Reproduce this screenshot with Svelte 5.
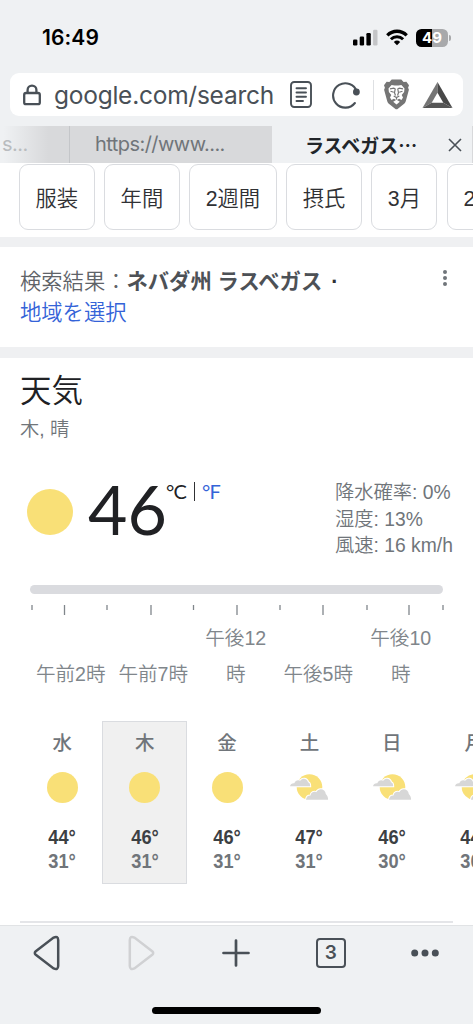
<script lang="ts">
    interface Day {
        name: string
        icon: 'sun' | 'cloudy'
        high: number
        low: number
    }

    const chips = ['服装', '年間', '2週間', '摂氏', '3月', '2月']

    const details = ['降水確率: 0%', '湿度: 13%', '風速: 16 km/h']

    const hours = ['午前2時', '午前7時', '午後12時', '午後5時', '午後10時']

    const ticks = [32, 64.5, 107, 151, 193.5, 237, 280, 323, 367, 409, 443]

    const days: Day[] = [
        { name: '水', icon: 'sun', high: 44, low: 31 },
        { name: '木', icon: 'sun', high: 46, low: 31 },
        { name: '金', icon: 'sun', high: 46, low: 31 },
        { name: '土', icon: 'cloudy', high: 47, low: 31 },
        { name: '日', icon: 'cloudy', high: 46, low: 30 },
        { name: '月', icon: 'cloudy', high: 44, low: 30 },
    ]

    let selected = $state(1)
</script>

<div class="phone">
    <header class="status-bar">
        <span class="time">16:49</span>
        <div class="status-icons">
            <svg class="signal" width="25" height="17" viewBox="0 0 25 17">
                <rect x="0" y="10.5" width="4.4" height="6" rx="1.2" />
                <rect x="6.7" y="7.5" width="4.4" height="9" rx="1.2" />
                <rect x="13.4" y="4" width="4.4" height="12.5" rx="1.2" />
                <rect x="20.1" y="0.8" width="4.4" height="15.7" rx="1.2" fill="#c4c5c7" />
            </svg>
            <svg class="wifi" width="22" height="17" viewBox="0 0 22 17" fill="none" stroke="#000">
                <path d="M1.3 6.3C6.7.9 15.3.9 20.7 6.3" stroke-width="3.3" />
                <path d="M4.9 10.2C8.3 6.8 13.7 6.8 17.1 10.2" stroke-width="3" />
                <path d="M7.8 12.9Q11 10.3 14.2 12.9L11 16.2Z" fill="#000" stroke="none" />
            </svg>
            <div class="battery">49</div>
            <span class="battery-tip"></span>
        </div>
    </header>

    <div class="address-bar">
        <svg class="lock" width="18" height="22" viewBox="0 0 18 22" fill="none" stroke="#495057" stroke-width="2.3">
            <rect x="1.2" y="9" width="15.6" height="11.2" rx="1.8" />
            <path d="M4.6 9V6a4.4 4.4 0 0 1 8.8 0v3" />
        </svg>
        <span class="url">google.com/search</span>
        <svg class="reader" width="22" height="27" viewBox="0 0 22 27" fill="none" stroke="#495057">
            <rect x="1" y="1" width="20" height="25" rx="3.2" stroke-width="1.9" />
            <path
                d="M6.5 7.3h9.5M6.5 11.5h9.5M6.5 15.8h9.5M6.5 20h6.5"
                stroke-width="1.9"
                stroke-linecap="round"
            />
        </svg>
        <svg class="reload" width="28" height="28" viewBox="0 0 28 28" fill="none">
            <path d="M24.8 10.4A12.2 12.2 0 1 0 22.9 22" stroke="#495057" stroke-width="2.1" stroke-linecap="round" />
            <circle cx="24.4" cy="11" r="3.4" fill="#495057" />
        </svg>
        <span class="separator"></span>
        <svg class="lion" width="27" height="31" viewBox="0 0 27 31">
            <path
                d="M8.7.5h9.6l2.3 2.5 2.8-.2 2.6 3.5-.9 2.4.8 2.1-3 11c-.5 1.7-1.3 2.8-2.7 3.8l-5.3 4.2q-1.4 1-2.8 0l-5.3-4.2C5.4 24.6 4.6 23.5 4.1 21.8l-3-11 .8-2.1L1 6.3l2.6-3.5 2.8.2Z"
                fill="#757575"
            />
            <path
                d="m8.6 6 3 .6h3.8l3-.6 3.1 3.6-.4 3.3-2.4 3.1 1.3 2.6-1.5 2.5-2.4-1.4-2.6 1.6-2.6-1.6-2.4 1.4L7 18.6l1.3-2.6-2.4-3.1-.4-3.3Z"
                fill="#fff"
            />
            <path
                d="M7 9.8l3.8-.7 1.4.9-.7 3.7 1 2.8M20 9.8l-3.8-.7-1.4.9.7 3.7-1 2.8M7.5 12.3l3.3 1M19.5 12.3l-3.3 1M10.7 17l2.8 1.5 2.8-1.5M13.5 18.5v2.2"
                fill="none"
                stroke="#757575"
                stroke-width="1.2"
            />
            <path d="m10.2 22.8 3.3-2 3.3 2-3.3 2.6Z" fill="#fff" />
        </svg>
        <svg class="bat" width="31" height="28" viewBox="0 0 31 28">
            <path d="M15.5 1 .5 27 9.7 21.7l5.8-10Z" fill="#757575" />
            <path d="m15.5 1 15 26-9.2-5.3-5.8-10Z" fill="#484848" />
            <path d="M.5 27h30l-9.2-5.3H9.7Z" fill="#555" />
        </svg>
    </div>

    <nav class="tabs">
        <div class="tab tab-first">s...</div>
        <div class="tab tab-second">https://www....</div>
        <div class="tab tab-active">
            <span class="tab-title">ラスベガス…</span>
            <svg width="14" height="14" viewBox="0 0 14 14">
                <path d="m1 1 12 12M13 1 1 13" stroke="#495057" stroke-width="1.6" />
            </svg>
        </div>
    </nav>

    <main>
        <div class="chips">
            {#each chips as chip}
                <button class="chip">{chip}</button>
            {/each}
        </div>

        <section class="location">
            <p>
                検索結果：<b>ネバダ州 ラスベガス</b><span class="dot">·</span><br />
                <a href="#region">地域を選択</a>
            </p>
            <svg width="6" height="18" viewBox="0 0 6 18" fill="#70757a">
                <circle cx="3" cy="3" r="2" />
                <circle cx="3" cy="9" r="2" />
                <circle cx="3" cy="15" r="2" />
            </svg>
        </section>

        <section class="weather">
            <h1>天気</h1>
            <p class="summary">木, 晴</p>

            <div class="current">
                <span class="sun sun-large"></span>
                <span class="temperature">46</span>
                <div class="units"><span class="deg">°</span>C<i></i><a href="#f"><span class="deg">°</span>F</a></div>
                <div class="details">
                    {#each details as detail}
                        <div>{detail}</div>
                    {/each}
                </div>
            </div>

            <div class="slider"></div>
            <svg class="ticks" width="473" height="12" viewBox="0 0 473 12">
                {#each ticks as x, i}
                    <line x1={x} x2={x} y1="1" y2={i % 2 ? 11 : 6} stroke="#80868b" stroke-width="1.3" />
                {/each}
            </svg>

            <div class="hours">
                {#each hours as hour}
                    <span>{hour}</span>
                {/each}
            </div>

            <div class="days">
                {#each days as day, i}
                    <button class="day" class:selected={i === selected} onclick={() => (selected = i)}>
                        <span class="day-name">{day.name}</span>
                        <span class="day-icon">
                            {#if day.icon === 'sun'}
                                <span class="sun"></span>
                            {:else}
                                <svg width="40" height="28" viewBox="0 0 40 28">
                                    <circle cx="20.5" cy="14" r="12.8" fill="#f9e077" />
                                    <path
                                        class="cloud"
                                        d="M1 13.3c.4-2.2 2-3.3 4.3-3.1 1-2.8 3.7-3.7 6-2.5 2.4-3.3 7-2.2 7.7 1.500 1.500.3 2.200 1.700 2.200 4.100Z"
                                    />
                                    <path
                                        class="cloud"
                                        d="M17 26.700c.3-3 1.900-4.400 4.500-4.300.6-3.100 3.200-4.400 5.800-3.200 2.200-4.700 9-3.700 9.500 1.700 1.500 1.400 2.300 3.300 2.300 5.800Z"
                                    />
                                </svg>
                            {/if}
                        </span>
                        <span class="high">{day.high}°</span>
                        <span class="low">{day.low}°</span>
                    </button>
                {/each}
            </div>
            <hr />
        </section>
    </main>

    <footer class="toolbar">
        <div class="actions">
            <svg width="28" height="36" viewBox="0 0 28 36" fill="none">
                <path
                    d="M2.8 16.2 20.6 2.6Q25 .5 25.2 5V31Q25 35.5 20.6 33.4L2.8 19.8Q.8 18 2.8 16.2Z"
                    stroke="#495057"
                    stroke-width="2.5"
                />
            </svg>
            <svg width="28" height="36" viewBox="0 0 28 36" fill="none">
                <path
                    d="M25.2 16.2 7.4 2.6Q3 .5 2.8 5V31Q3 35.5 7.4 33.4L25.2 19.8Q27.2 18 25.2 16.2Z"
                    stroke="#d0d1d3"
                    stroke-width="2.5"
                />
            </svg>
            <svg width="28" height="28" viewBox="0 0 28 28">
                <path d="M14 1.5v25M1.5 14h25" stroke="#495057" stroke-width="2.7" stroke-linecap="round" />
            </svg>
            <span class="tab-count">3</span>
            <svg width="30" height="8" viewBox="0 0 30 8" fill="#495057">
                <circle cx="4.7" cy="4" r="3.5" />
                <circle cx="15" cy="4" r="3.5" />
                <circle cx="25.3" cy="4" r="3.5" />
            </svg>
        </div>
        <div class="home-indicator"></div>
    </footer>
</div>

<style>
    :global(body) {
        margin: 0;
        overflow: hidden;
    }

    .phone {
        display: flex;
        flex-direction: column;
        width: 473px;
        height: 1024px;
        overflow: hidden;
        background: #eff1f3;
        color: #202124;
        font-family: 'Liberation Sans', 'Noto Sans CJK JP', sans-serif;
        font-weight: 350;
    }

    .phone * {
        box-sizing: border-box;
    }

    svg {
        display: block;
        flex: none;
    }

    p,
    h1 {
        margin: 0;
        font-weight: 350;
    }

    a {
        color: #3463d8;
        text-decoration: none;
    }

    button {
        padding: 0;
        font: inherit;
        color: inherit;
    }

    .status-bar {
        flex: none;
        display: flex;
        align-items: center;
        justify-content: space-between;
        height: 73px;
        padding: 2px 22px 0 42px;
        color: #000;
    }

    .time {
        font: 600 21px/24px Inter, sans-serif;
        letter-spacing: 0.1px;
    }

    .status-icons {
        display: flex;
        align-items: center;
    }

    .wifi {
        margin: 0 8px 0 8px;
    }

    .battery {
        width: 32px;
        height: 18px;
        border-radius: 5.5px;
        background: linear-gradient(90deg, #000 49%, #a8a9ab 49%);
        color: #fff;
        font: 700 15px/18px Inter, sans-serif;
        text-align: center;
    }

    .battery-tip {
        width: 2px;
        height: 6px;
        margin-left: 1px;
        border-radius: 0 2px 2px 0;
        background: #a8a9ab;
    }

    .address-bar {
        flex: none;
        display: flex;
        align-items: center;
        height: 43px;
        margin: 0 10px;
        padding: 0 10px 0 13px;
        border-radius: 9px;
        background: #fff;
    }

    .url {
        width: 236px;
        margin-left: 13px;
        color: #495057;
        font: 400 24.5px/32px Inter, sans-serif;
        letter-spacing: -0.25px;
        white-space: nowrap;
    }

    .reload {
        margin-left: 20px;
    }

    .separator {
        width: 1px;
        height: 30px;
        margin: 0 9px 0 13px;
        background: #dee0e3;
    }

    .bat {
        margin-left: auto;
    }

    .tabs {
        flex: none;
        display: flex;
        height: 37px;
        margin-top: 10px;
    }

    .tab {
        font: 400 20px/37px Inter, sans-serif;
        letter-spacing: -0.55px;
        color: #70757a;
        background: #d8d9db;
        white-space: nowrap;
    }

    .tab-first {
        width: 70px;
        padding-left: 2px;
        border-right: 1px solid #c4c6c9;
        background: linear-gradient(90deg, #eff1f3 5%, #d8d9db 70%);
        color: #b9bcbf;
    }

    .tab-second {
        width: 202px;
        padding-left: 25px;
    }

    .tab-active {
        display: flex;
        align-items: center;
        width: 201px;
        padding-left: 33px;
        border-right: 1px solid #d8d9db;
        background: none;
        color: #212529;
    }

    .tab-title {
        width: 143px;
        font: 700 19px/35px 'Noto Sans CJK JP', sans-serif;
        letter-spacing: 0;
    }

    main {
        flex: none;
        height: 762px;
        overflow: hidden;
        background: #fff;
    }

    .chips {
        display: flex;
        gap: 9.5px;
        width: 600px;
        height: 74px;
        padding: 1px 0 0 19px;
    }

    .chip {
        height: 66px;
        padding: 0 15.5px 2px;
        border: 1px solid #dadce0;
        border-radius: 9px;
        background: #fff;
        color: #303134;
        font-size: 21.3px;
    }

    .location {
        display: flex;
        justify-content: space-between;
        height: 121px;
        padding: 20px 25px 0 20px;
        border: solid #eff0f2;
        border-width: 10px 0 11px;
        color: #5f6368;
        font-size: 21.3px;
        line-height: 30.5px;
    }

    .location b {
        color: #4d5156;
        font-weight: 700;
    }

    .dot {
        margin-left: 9px;
        color: #303134;
        font-weight: 700;
    }

    .location svg {
        margin-top: 2px;
    }

    h1 {
        padding: 10px 20px 0;
        font-size: 31.5px;
        line-height: 46px;
    }

    .summary {
        padding: 1px 20px 0;
        color: #70757a;
        font-size: 19.3px;
        line-height: 30px;
    }

    .current {
        display: flex;
        height: 94px;
        margin-top: 34px;
        padding: 0 20px 0 27px;
    }

    .sun {
        width: 31px;
        height: 31px;
        border-radius: 50%;
        background: #f9e077;
    }

    .sun-large {
        width: 46px;
        height: 46px;
        margin-top: 10px;
    }

    .temperature {
        width: 78px;
        margin-left: 15px;
        font: 400 68px/60px Lato, sans-serif;
    }

    .units {
        display: flex;
        align-items: center;
        height: 24px;
        font: 400 20px/24px Lato, sans-serif;
    }

    .units a {
        display: flex;
    }

    .deg {
        width: 7.5px;
    }

    .units i {
        width: 1.5px;
        height: 19px;
        margin: 0 6.5px 0 7px;
        background: #303134;
    }

    .details {
        width: 118px;
        margin-top: 1px;
        margin-left: auto;
        color: #70757a;
        font-size: 19.3px;
        line-height: 26.5px;
        white-space: nowrap;
    }

    .slider {
        height: 9px;
        margin: 12px 30px 0;
        border-radius: 5px;
        background: #dadbdf;
    }

    .ticks {
        margin-top: 10px;
    }

    .hours {
        display: flex;
        align-items: flex-end;
        height: 76px;
        padding-left: 29.5px;
        color: #80868b;
        font-size: 19.6px;
        line-height: 35.5px;
        text-align: center;
    }

    .hours span {
        flex: none;
        width: 82.5px;
        padding: 0 5px;
    }

    .days {
        display: flex;
        width: 520px;
        height: 163px;
        margin-top: 29px;
        padding-left: 19.5px;
    }

    .day {
        --cell: #fff;
        flex: none;
        display: flex;
        flex-direction: column;
        align-items: center;
        width: 85.5px;
        margin-right: -3.1px;
        padding-top: 5px;
        border: 1px solid transparent;
        background: none;
        font-size: 20px;
        line-height: 24px;
    }

    .day.selected {
        --cell: #f0f0f0;
        border-color: #dadce0;
        background: #f0f0f0;
    }

    .day-name {
        color: #70757a;
        font-family: 'Noto Sans CJK JP', sans-serif;
        font-weight: 500;
        font-size: 19.5px;
        line-height: 30px;
    }

    .day-icon {
        display: flex;
        align-items: center;
        height: 60px;
        margin-bottom: 8px;
    }

    .cloud {
        fill: #d7d7d7;
        stroke: var(--cell);
        stroke-width: 2px;
        paint-order: stroke;
    }

    .high,
    .low {
        color: #3c4043;
        font-weight: 700;
        transform: scaleX(0.91);
    }

    .low {
        color: #70757a;
    }

    hr {
        height: 2px;
        margin: 37px 20px 0;
        border: 0;
        background: #e4e5e8;
    }

    .toolbar {
        flex: 1;
        border-top: 1px solid #e1e3e5;
    }

    .actions {
        display: flex;
        align-items: center;
        justify-content: space-between;
        height: 54px;
        padding: 0 33px;
    }

    .tab-count {
        width: 30px;
        height: 30px;
        margin-right: -2px;
        border: 2px solid #495057;
        border-radius: 4px;
        color: #495057;
        font: 600 19px/26px Inter, sans-serif;
        text-align: center;
    }

    .home-indicator {
        width: 169px;
        height: 7px;
        margin: 27px auto 0;
        border-radius: 4px;
        background: #000;
    }
</style>
